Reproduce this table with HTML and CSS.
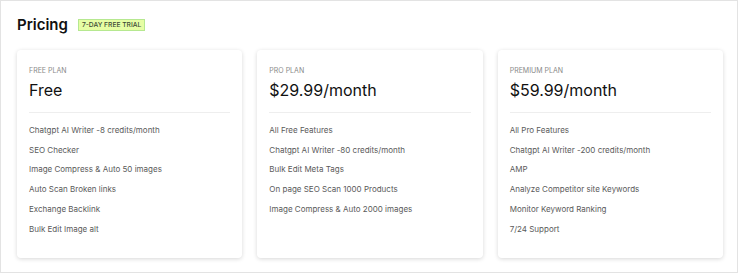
FILE: index.html
```html
<!DOCTYPE html>
<html>
  <head>
    <title>Pricing</title>
    <link rel="stylesheet" href="styles.css">
  </head>
  <body>
    <div class="page">
      <div class="header">
        <h2>Pricing</h2>
        <span class="badge">7-Day Free Trial</span>
      </div>

      <div class="plans">
        <div class="plan">
          <div class="plan-name">Free Plan</div>
          <div class="plan-price">Free</div>
          <ul class="features">
            <li>Chatgpt AI Writer -8 credits/month</li>
            <li>SEO Checker</li>
            <li>Image Compress &amp; Auto 50 images</li>
            <li>Auto Scan Broken links</li>
            <li>Exchange Backlink</li>
            <li>Bulk Edit Image alt</li>
          </ul>
        </div>

        <div class="plan">
          <div class="plan-name">Pro Plan</div>
          <div class="plan-price">$29.99/month</div>
          <ul class="features">
            <li>All Free Features</li>
            <li>Chatgpt AI Writer -80 credits/month</li>
            <li>Bulk Edit Meta Tags</li>
            <li>On page SEO Scan 1000 Products</li>
            <li>Image Compress &amp; Auto 2000 images</li>
          </ul>
        </div>

        <div class="plan">
          <div class="plan-name">Premium Plan</div>
          <div class="plan-price">$59.99/month</div>
          <ul class="features">
            <li>All Pro Features</li>
            <li>Chatgpt AI Writer -200 credits/month</li>
            <li>AMP</li>
            <li>Analyze Competitor site Keywords</li>
            <li>Monitor Keyword Ranking</li>
            <li>7/24 Support</li>
          </ul>
        </div>
      </div>
    </div>
  </body>
</html>
```

FILE: styles.css
```css
body {
  margin: 0;
  font-family: Inter, "Noto Sans", sans-serif;
  background-color: #fff;
}

.page {
  width: 738px;
  height: 273px;
  border: 1px solid #e3e3e3;
  padding: 13px 14px 0 16px;
  box-sizing: border-box;
}

.header {
  display: flex;
  align-items: center;
  gap: 10px;
}

h2 {
  margin: 0;
  font-size: 15px;
  font-weight: 600;
  color: #111;
  line-height: 21px;
}

.badge {
  display: inline-block;
  background-color: #e6fda4;
  border: 1px solid #b6e890;
  color: #3d4a35;
  font-size: 6.7px;
  font-weight: 500;
  text-transform: uppercase;
  line-height: 10px;
  padding: 0 3px;
  margin-top: 1px;
}

.plans {
  display: grid;
  grid-template-columns: repeat(3, 1fr);
  gap: 15px;
  margin-top: 15px;
}

.plan {
  height: 208px;
  box-sizing: border-box;
  padding: 16px 12px 20px;
  background-color: #fff;
  border-radius: 4px;
  box-shadow: 0px 1px 4px rgba(0, 0, 0, 0.16);
}

.plan-name {
  font-size: 7px;
  color: #8a8a8a;
  text-transform: uppercase;
}

.plan-price {
  margin-top: 5px;
  font-size: 16px;
  color: #111;
  padding-bottom: 12px;
  border-bottom: 1px solid #eee;
}

.features {
  list-style: none;
  margin: 8px 0 0;
  padding: 0;
}

.features li {
  font-size: 8px;
  line-height: 19.7px;
  color: #5a5a5a;
}
```
